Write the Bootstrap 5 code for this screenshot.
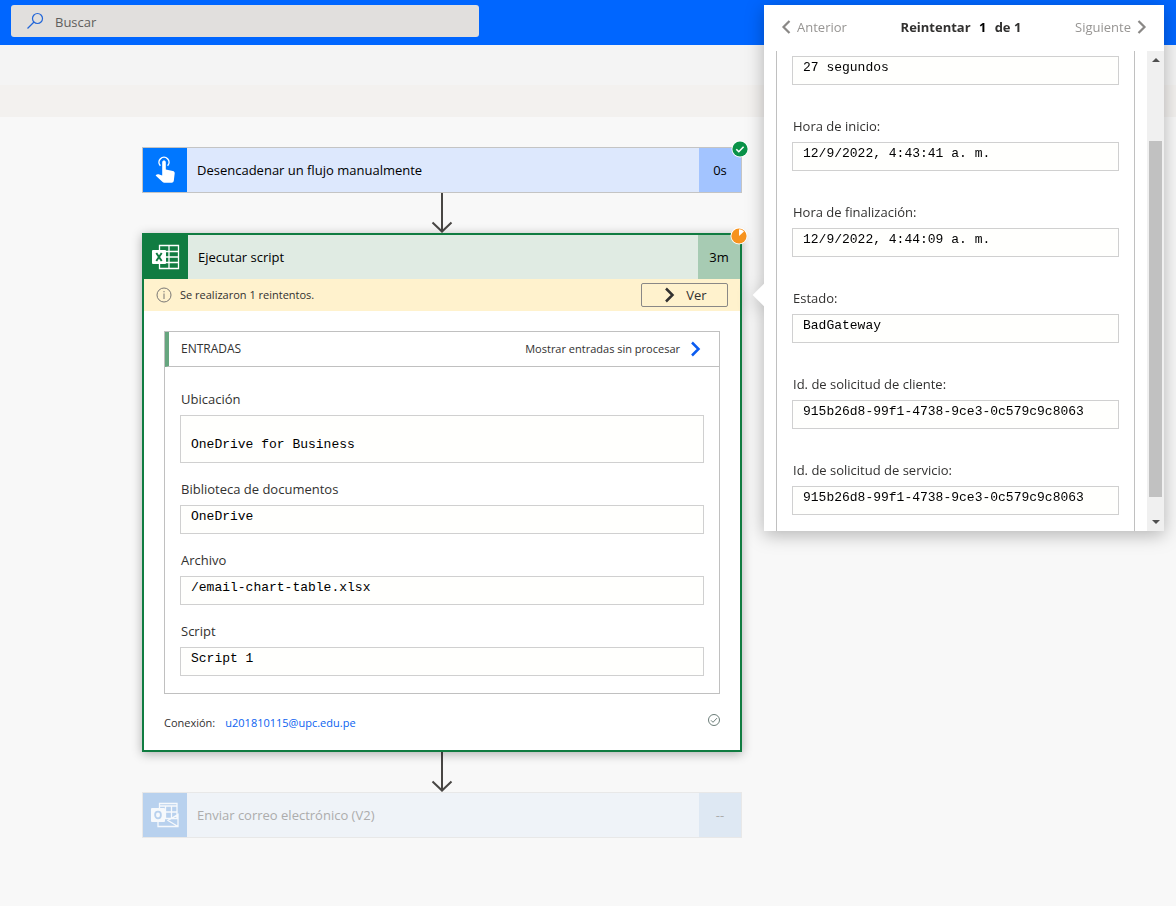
<!DOCTYPE html>
<html lang="es">
<head>
<meta charset="utf-8">
<meta name="viewport" content="width=device-width, initial-scale=1">
<title>Historial de ejecución</title>
<link href="https://cdn.jsdelivr.net/npm/bootstrap@5.3.0/dist/css/bootstrap.min.css" rel="stylesheet">
<style>
  :root { --ui: "Open Sans", "Noto Sans", sans-serif; --code: "Liberation Mono", monospace; }
  body { font-family: var(--ui); font-size: 13px; line-height: 20px; color: #323130; background: #f8f8f8; min-height: 100vh; }
  svg { display: block; flex: none; }
  .topbar { background: #06f; height: 45px; padding: 5px 11px; align-items: flex-start; }
  .searchbox { background: #e1dfdd; border-radius: 3px; width: 468px; height: 32px; padding: 0 16px; gap: 10px; }
  .searchbox input { font-size: 13px; color: #605e5c; background: none; border: 0; outline: 0; padding: 2px 0 0; height: 32px; }
  .searchbox input::placeholder { color: #605e5c; opacity: 1; }
  .band-a { height: 40px; background: #f4f4f4; }
  .band-b { height: 32px; background: #f3f1ef; }
  .canvas { padding: 30px 292px 40px 0; }
  .flow { width: 600px; }
  .step { height: 46px; border: 1px solid #c4c4c4; font-size: 13px; color: #000; }
  .step-icon { width: 44px; align-self: stretch; }
  .step-title { padding-left: 10px; }
  .step-time { width: 42px; align-self: stretch; }
  .step-trigger { background: #dde8fd; }
  .step-trigger .step-icon { background: #0077ff; }
  .step-trigger .step-time { background: #a3c4ff; }
  .step-pending { background: #eff3f8; border-color: #e8e8e8; color: #acacac; }
  .step-pending .step-icon { background: #b8d1ee; }
  .step-pending .step-time { background: #dee8f3; }
  .status { position: absolute; right: -8px; top: -8px; }
  .script-card { border: 2px solid #107c41; background: #fff; box-shadow: 0 2px 10px rgba(0,0,0,.3); }
  .script-head { height: 44px; background: #e0ebe3; color: #000; font-size: 13px; }
  .script-head .step-icon { background: #107c41; }
  .script-head .step-time { background: #a7cbb3; }
  .retry { height: 32px; background: #fff2cd; font-size: 11px; padding: 0 12px; gap: 8px; }
  .btn-view { width: 87px; height: 24px; padding: 0; border: 1px solid #8a8886; border-radius: 2px; font-size: 13px; font-weight: 500; line-height: 20px; color: #323130; }
  .script-body { padding: 20px 20px 17px; }
  .inputs { border: 1px solid #c0c0c0; }
  .inputs-head { height: 35px; border-bottom: 1px solid #c0c0c0; border-left: 4px solid #66a67f; padding: 0 17px 0 12px; font-size: 12px; }
  .raw-link { color: #323130; font-size: 11px; gap: 10px; }
  .inputs-body { padding: 22px 15px 17px; gap: 16px; }
  .fld label { display: block; font-size: 13px; font-weight: 500; color: #323130; margin: 0 1px 6px; line-height: 20px; }
  .fld input { display: block; width: 100%; height: 29px; border: 1px solid #d0d0d0; border-radius: 0; background: #fffffd; color: #000; font-family: var(--code); font-size: 13px; padding: 0 10px 6px; outline: 0; }
  .fld input.tall { height: 48px; padding: 11px 10px 0; }
  .conn { margin-top: 19px; font-size: 11px; line-height: 20px; gap: 10px; }
  .conn a { color: #0b62f0; }
  .retry-panel { position: absolute; top: 5px; right: 12px; width: 400px; filter: drop-shadow(0 4px 9px rgba(0,0,0,.28)); }
  .retry-panel::before { content: ""; position: absolute; width: 16px; height: 16px; left: -8px; top: 282px; background: #fff; transform: rotate(45deg); }
  .panel-inner { position: relative; background: #fff; }
  .pager { height: 46px; padding: 0 17px 3px; }
  .btn-page { background: none; border: 0; padding: 0; font-size: 13px; color: #979593; gap: 6px; }
  .pager-mid { font-weight: 700; gap: 7px; }
  .pager-mid input { width: 10px; border: 0; padding: 0; font-weight: 700; text-align: center; color: #000; background: none; font-size: 13px; height: 22px; }
  .details { border: solid #c0c0c0; border-width: 0 1px; margin: 0 12px; padding: 5px 15px 16px; gap: 31px; }
  .scroller { width: 17px; background: #f0f0f0; padding: 6px 0; }
  .scroll-thumb { width: 13px; background: #c1c1c1; margin: 78px 0 22px; }
</style>
</head>
<body class="position-relative">
<header class="topbar d-flex">
  <div class="searchbox d-flex align-items-center">
    <svg width="18" height="18" viewBox="0 0 18 18" fill="none" stroke="#2266d8" stroke-width="1.2"><circle cx="10.500" cy="6.5" r="5"/><path d="M7 10 .5 16.500"/></svg>
    <input type="search" class="flex-grow-1" placeholder="Buscar" aria-label="Buscar">
  </div>
</header>
<div class="band-a"></div>
<div class="band-b"></div>

<main class="canvas d-flex justify-content-center">
  <div class="flow d-flex flex-column">
    <div class="step step-trigger position-relative d-flex align-items-center">
      <span class="step-icon d-flex align-items-center justify-content-center">
        <svg width="22" height="28" viewBox="0 0 22 28"><path d="M6.400 9.700A5 5 0 1 1 13.600 9.700" fill="none" stroke="#fff" stroke-width="1.500"/><path d="M8.200 6.200c0-2.400 3.600-2.400 3.600 0v7.300l7 1.500c1.500.4 2 1.200 1.900 2.300l-.9 7.400c-.2 1.300-1 2-2.200 2H10.300c-.7 0-1.200-.3-1.700-.8L1.600 19.500c1-1.200 2.300-1.400 3.700-.9l2.900.9z" fill="#fff"/></svg>
      </span>
      <span class="step-title flex-grow-1">Desencadenar un flujo manualmente</span>
      <span class="step-time d-flex align-items-center justify-content-center">0s</span>
      <svg class="status" width="18" height="18" viewBox="0 0 18 18"><circle cx="9" cy="9" r="8.500" fill="#fff"/><circle cx="9" cy="9" r="7.600" fill="#099248"/><path d="m5.300 9.200 2.500 2.500 4.800-4.900" fill="none" stroke="#fff" stroke-width="1.600"/></svg>
    </div>
    <svg class="align-self-center" width="24" height="40" viewBox="0 0 24 40" fill="none" stroke="#484644" stroke-width="2"><path d="M12 0v38M2.500 29.500l9.500 9 9.500-9"/></svg>

    <section class="script-card position-relative">
      <div class="script-head d-flex align-items-center">
        <span class="step-icon d-flex align-items-center justify-content-center">
          <svg width="28" height="26" viewBox="0 0 28 26"><path d="M7.500 1.500h19v23h-19zM7.500 7.500h19M7.500 13h19M7.500 18.500h19M17 1.500v23" fill="none" stroke="#fff" stroke-width="1.300"/><rect x="0" y="6" width="14" height="14" rx="1" fill="#fff"/><path d="m4.300 9 5.400 8M9.700 9l-5.400 8" stroke="#107c41" stroke-width="1.900"/></svg>
        </span>
        <span class="step-title flex-grow-1">Ejecutar script</span>
        <span class="step-time d-flex align-items-center justify-content-center">3m</span>
      </div>
      <svg class="status" width="18" height="18" viewBox="0 0 18 18"><circle cx="9" cy="9" r="8.500" fill="#fff"/><circle cx="9" cy="9" r="7.600" fill="#f7931e"/><path d="M9 9V2.200a6.800 6.800 0 0 1 5 2.200z" fill="#fff"/></svg>
      <div class="retry d-flex align-items-center">
        <svg width="16" height="16" viewBox="0 0 16 16" fill="none" stroke="#797775"><circle cx="8" cy="8" r="7"/><path d="M8 6.500V12M8 4v1.300"/></svg>
        <span class="flex-grow-1">Se realizaron 1 reintentos.</span>
        <button type="button" class="btn btn-view d-flex align-items-center justify-content-center gap-2">
          <svg width="16" height="16" viewBox="0 0 16 16" fill="none" stroke="#323130" stroke-width="2.500"><path d="m4 1.500 6.500 6.500L4 14.500"/></svg>Ver</button>
      </div>
      <div class="script-body">
        <div class="inputs">
          <div class="inputs-head d-flex align-items-center justify-content-between">
            <span>ENTRADAS</span>
            <a href="#" class="raw-link d-flex align-items-center text-decoration-none">Mostrar entradas sin procesar
              <svg width="12" height="16" viewBox="0 0 12 16" fill="none" stroke="#0b5cf0" stroke-width="2.500"><path d="m2 1.500 6.500 6.500L2 14.500"/></svg></a>
          </div>
          <div class="inputs-body d-flex flex-column">
            <div class="fld"><label for="f1">Ubicación</label><input id="f1" class="tall" readonly value="OneDrive for Business"></div>
            <div class="fld"><label for="f2">Biblioteca de documentos</label><input id="f2" readonly value="OneDrive"></div>
            <div class="fld"><label for="f3">Archivo</label><input id="f3" readonly value="/email-chart-table.xlsx"></div>
            <div class="fld"><label for="f4">Script</label><input id="f4" readonly value="Script 1"></div>
          </div>
        </div>
        <div class="conn d-flex align-items-start">
          <span>Conexión:</span>
          <a href="#" class="flex-grow-1 text-decoration-none">u201810115@upc.edu.pe</a>
          <svg width="12" height="14" viewBox="0 0 12 14" fill="none" stroke="#6b7d78"><circle cx="6" cy="7" r="5.500"/><path d="m3 7.300 2 2 4-4.200"/></svg>
        </div>
      </div>
    </section>
    <svg class="align-self-center" width="24" height="40" viewBox="0 0 24 40" fill="none" stroke="#484644" stroke-width="2"><path d="M12 0v38M2.500 29.500l9.500 9 9.500-9"/></svg>

    <div class="step step-pending d-flex align-items-center">
      <span class="step-icon d-flex align-items-center justify-content-center">
        <svg width="28" height="26" viewBox="0 0 28 26"><path d="M8.500 1.500h17.500v15H8.500zM8.500 4h17.500M8.500 10h17.500M14.500 4v12M20.500 4v12M7 13v11.500h20V12.500L17 18.500l10 6" fill="none" stroke="#f6f9fc" stroke-width="1.300"/><rect x="0" y="6" width="14" height="14" rx="1" fill="#f6f9fc"/><ellipse cx="7" cy="13" rx="2.900" ry="3.300" fill="none" stroke="#b8d1ee" stroke-width="1.800"/></svg>
      </span>
      <span class="step-title flex-grow-1">Enviar correo electrónico (V2)</span>
      <span class="step-time d-flex align-items-center justify-content-center">--</span>
    </div>
  </div>
</main>

<aside class="retry-panel">
  <div class="panel-inner">
    <div class="pager d-flex align-items-center justify-content-between">
      <button type="button" class="btn-page d-flex align-items-center">
        <svg width="10" height="14" viewBox="0 0 10 14" fill="none" stroke="#8a8886" stroke-width="2.200"><path d="M8.500 1 2.500 7l6 6"/></svg>Anterior</button>
      <div class="pager-mid d-flex align-items-center"><label for="pg">Reintentar</label><input id="pg" value="1"><span>de 1</span></div>
      <button type="button" class="btn-page d-flex align-items-center">Siguiente
        <svg width="10" height="14" viewBox="0 0 10 14" fill="none" stroke="#8a8886" stroke-width="2.200"><path d="m1.500 1 6 6-6 6"/></svg></button>
    </div>
    <div class="d-flex">
      <div class="details flex-grow-1 d-flex flex-column">
        <div class="fld"><input aria-label="Duración" readonly value="27 segundos"></div>
        <div class="fld"><label for="d1">Hora de inicio:</label><input id="d1" readonly value="12/9/2022, 4:43:41 a. m."></div>
        <div class="fld"><label for="d2">Hora de finalización:</label><input id="d2" readonly value="12/9/2022, 4:44:09 a. m."></div>
        <div class="fld"><label for="d3">Estado:</label><input id="d3" readonly value="BadGateway"></div>
        <div class="fld"><label for="d4">Id. de solicitud de cliente:</label><input id="d4" readonly value="915b26d8-99f1-4738-9ce3-0c579c9c8063"></div>
        <div class="fld"><label for="d5">Id. de solicitud de servicio:</label><input id="d5" readonly value="915b26d8-99f1-4738-9ce3-0c579c9c8063"></div>
      </div>
      <div class="scroller d-flex flex-column align-items-center">
        <svg width="8" height="6" viewBox="0 0 8 6"><path d="M4 1 8 5H0z" fill="#505050"/></svg>
        <div class="scroll-thumb flex-grow-1"></div>
        <svg width="8" height="6" viewBox="0 0 8 6"><path d="M0 1h8L4 5z" fill="#505050"/></svg>
      </div>
    </div>
  </div>
</aside>
<script src="https://cdn.jsdelivr.net/npm/bootstrap@5.3.0/dist/js/bootstrap.bundle.min.js"></script>
</body>
</html>
